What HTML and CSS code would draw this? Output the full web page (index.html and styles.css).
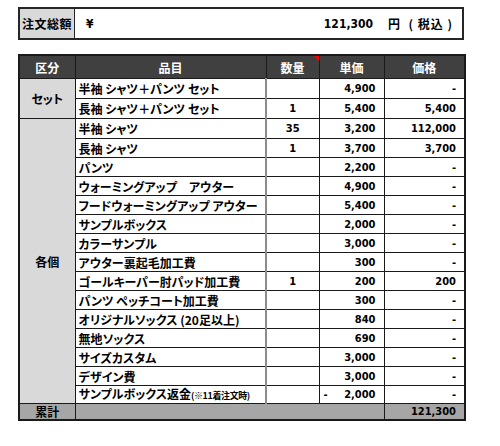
FILE: index.html
```html
<!DOCTYPE html>
<html lang="ja">
<head>
<meta charset="utf-8">
<link rel="stylesheet" href="styles.css">
</head>
<body>
<div class="total-box">
  <div class="total-label">注文総額</div>
  <div class="total-value">
    <span class="yen">¥</span>
    <span class="amount num">121,300</span>
    <span class="unit">円&nbsp;&nbsp;(&nbsp;税込&nbsp;)</span>
  </div>
</div>

<table class="order">
  <colgroup>
    <col class="c-kubun"><col class="c-item"><col class="c-qty"><col class="c-price"><col class="c-total">
  </colgroup>
  <thead>
    <tr class="head">
      <th>区分</th><th>品目</th><th class="qty-h">数量<span class="comment"></span></th><th>単価</th><th>価格</th>
    </tr>
  </thead>
  <tbody>
    <tr class="tall"><td class="kubun" rowspan="2">セット</td><td class="item">半袖 シャツ＋パンツ セット</td><td class="qty"></td><td class="num">4,900</td><td class="num">-</td></tr>
    <tr class="tall"><td class="item">長袖 シャツ＋パンツ セット</td><td class="qty num-c">1</td><td class="num">5,400</td><td class="num">5,400</td></tr>
    <tr class="tall"><td class="kubun" rowspan="15">各個</td><td class="item">半袖 シャツ</td><td class="qty num-c">35</td><td class="num">3,200</td><td class="num">112,000</td></tr>
    <tr><td class="item">長袖 シャツ</td><td class="qty num-c">1</td><td class="num">3,700</td><td class="num">3,700</td></tr>
    <tr><td class="item">パンツ</td><td class="qty"></td><td class="num">2,200</td><td class="num">-</td></tr>
    <tr><td class="item">ウォーミングアップ　アウター</td><td class="qty"></td><td class="num">4,900</td><td class="num">-</td></tr>
    <tr><td class="item">フードウォーミングアップ アウター</td><td class="qty"></td><td class="num">5,400</td><td class="num">-</td></tr>
    <tr><td class="item">サンプルボックス</td><td class="qty"></td><td class="num">2,000</td><td class="num">-</td></tr>
    <tr><td class="item">カラーサンプル</td><td class="qty"></td><td class="num">3,000</td><td class="num">-</td></tr>
    <tr><td class="item">アウター裏起毛加工費</td><td class="qty"></td><td class="num">300</td><td class="num">-</td></tr>
    <tr><td class="item">ゴールキーパー肘パッド加工費</td><td class="qty num-c">1</td><td class="num">200</td><td class="num">200</td></tr>
    <tr><td class="item">パンツ ペッチコート加工費</td><td class="qty"></td><td class="num">300</td><td class="num">-</td></tr>
    <tr><td class="item">オリジナルソックス (20足以上)</td><td class="qty"></td><td class="num">840</td><td class="num">-</td></tr>
    <tr><td class="item">無地ソックス</td><td class="qty"></td><td class="num">690</td><td class="num">-</td></tr>
    <tr><td class="item">サイズカスタム</td><td class="qty"></td><td class="num">3,000</td><td class="num">-</td></tr>
    <tr><td class="item">デザイン費</td><td class="qty"></td><td class="num">3,000</td><td class="num">-</td></tr>
    <tr class="last"><td class="item">サンプルボックス返金<small>(※11着注文時)</small></td><td class="qty"></td><td class="num neg"><span class="minus">-</span><span>2,000</span></td><td class="num">-</td></tr>
    <tr class="sum"><td class="kubun-sum">累計</td><td colspan="3"></td><td class="num">121,300</td></tr>
  </tbody>
</table>
</body>
</html>
```
FILE: styles.css
```css
html, body {
  margin: 0;
  padding: 0;
  background: #ffffff;
}
body {
  padding: 7px 0 0 18px;
  font-family: "Noto Sans CJK JP", "Noto Sans", sans-serif;
  font-weight: bold;
  font-size: 12px;
  font-feature-settings: "palt";
  color: #000;
}
.num, .amount, .yen {
  font-family: "DejaVu Sans Condensed", "DejaVu Sans", sans-serif;
  font-weight: bold;
  font-size: 11px;
}
.total-box {
  display: flex;
  width: 442px;
  height: 29px;
  border: 2px solid #262626;
  box-sizing: content-box;
}
.total-label {
  width: 54px;
  background: #d9d9d9;
  border-right: 1px solid #262626;
  display: flex;
  align-items: center;
  justify-content: center;
  font-size: 12px;
  letter-spacing: 0.5px;
}
.total-value {
  flex: 1;
  display: flex;
  align-items: center;
  padding: 0 9px 0 11px;
}
.yen { flex: 1; font-size: 12px; }
.amount { font-size: 12px; margin-right: 15px; }
.unit { font-size: 12px; letter-spacing: 1px; }

.order {
  margin-top: 14px;
  border-collapse: collapse;
  border: 2px solid #1a1a1a;
  table-layout: fixed;
  width: 446px;
}
.c-kubun { width: 56px; }
.c-item { width: 191px; }
.c-qty { width: 53px; }
.c-price { width: 65px; }
.c-total { width: 81px; }

.order th, .order td {
  padding: 0 3px;
  white-space: nowrap;
  overflow: hidden;
  line-height: 17px;
}
.head th {
  background: #404040;
  color: #ffffff;
  height: 22px;
  border: 1px solid #1a1a1a;
  text-align: center;
  font-size: 12px;
}
.qty-h { position: relative; }
.comment {
  position: absolute;
  top: 0;
  right: 0;
  width: 0;
  height: 0;
  border-top: 5px solid #ff0000;
  border-left: 5px solid transparent;
}
.order tbody tr { height: 19px; }
.order tbody tr.tall { height: 20px; }
.order tbody td {
  border: 1px solid #1a1a1a;
}
.order tbody td.kubun {
  background: #d9d9d9;
  text-align: center;
  vertical-align: middle;
  border-right: 1px solid #1a1a1a;
}
.item { text-align: left; }
.order tbody td.qty {
  border-left: 2px solid #8c8c8c;
  text-align: center;
}
.num-c {
  font-family: "DejaVu Sans Condensed", "DejaVu Sans", sans-serif;
  font-size: 11px;
}
.order td.num { text-align: right; padding-right: 8px; }
.neg .minus { float: left; padding-left: 1px; }
small { font-size: 9px; letter-spacing: -0.4px; }
.order tbody tr.last { height: 16px; }
.order tbody tr.last td { line-height: 15px; }
.order tbody tr.sum { height: 16px; }
.order tbody tr.sum td {
  background: #a6a6a6;
  line-height: 15px;
}
.order tbody td.kubun-sum { text-align: center; }
```
